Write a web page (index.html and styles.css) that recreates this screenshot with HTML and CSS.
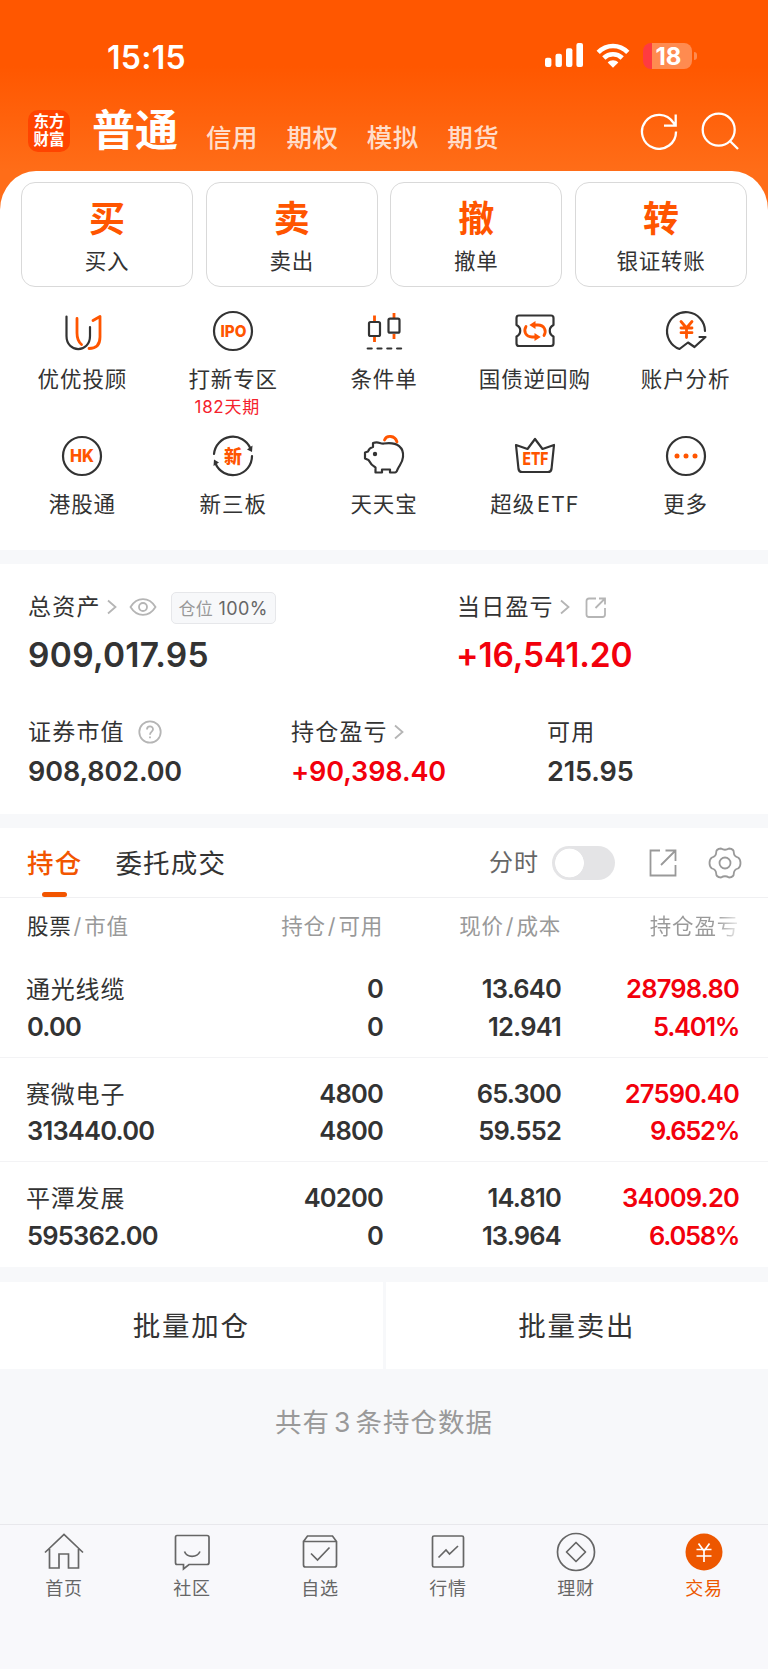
FILE: index.html
```html
<!DOCTYPE html>
<html lang="zh-CN">
<head>
<meta charset="utf-8">
<title>交易</title>
<link rel="stylesheet" href="styles.css">
</head>
<body>
<header class="top">
  <div class="status">
    <span class="clock">15:15</span>
    <div class="status-icons">
      <svg class="signal" width="38" height="24" viewBox="0 0 38 24" fill="#fff"><rect x="0" y="14.7" width="6.4" height="9.3" rx="2"/><rect x="10.5" y="10.7" width="6.4" height="13.3" rx="2"/><rect x="21" y="5.3" width="6.4" height="18.7" rx="2"/><rect x="31.4" y="0" width="6.6" height="24" rx="2"/></svg>
      <svg class="wifi" width="34" height="25" viewBox="0 0 34 25"><g fill="none" stroke="#fff" stroke-width="4.6"><path d="M2.2 9.3C10.5.8 23.5.8 31.800 9.300"/><path d="M7.800 15C13 9.900 21 9.900 26.200 15"/></g><path d="M17 24.800 11.700 19.400C14.500 16.500 19.500 16.500 22.300 19.400Z" fill="#fff"/></svg>
      <div class="battery"><span>18</span></div>
    </div>
  </div>
  <div class="title-bar">
    <div class="logo"><span>东方</span><span>财富</span></div>
    <h1>普通</h1>
    <nav class="accounts"><a>信用</a><a>期权</a><a>模拟</a><a>期货</a></nav>
    <svg class="refresh" width="38" height="38" viewBox="0 0 38 38" fill="none" stroke="#fff" stroke-width="2.300"><path d="M36 19.500A17 17 0 1 1 33.300 10.600L35.300 13M24 13.700H35.700V2.500"/></svg>
    <svg class="search" width="38" height="38" viewBox="0 0 38 38" fill="none" stroke="#fff" stroke-width="2.300"><circle cx="17.700" cy="17.700" r="16"/><path d="M28.700 28.700 37 37"/></svg>
  </div>
</header>
<main>
<section class="sheet">
  <div class="actions">
    <a class="action"><b>买</b><span>买入</span></a>
    <a class="action"><b>卖</b><span>卖出</span></a>
    <a class="action"><b>撤</b><span>撤单</span></a>
    <a class="action"><b>转</b><span>银证转账</span></a>
  </div>
  <div class="tools">
    <a class="tool"><svg class="ico" viewBox="0 0 44 44"><path d="M6.500 7.500V27C6.500 44.500 30 44.500 30 27V18"/><path class="o" d="M17 9.500V24C17 30 18.500 33 21.500 35.500M33 11.500 40 7.500V28C40 35.500 36 39.500 29 39.500"/></svg><span>优优投顾</span></a>
    <a class="tool"><svg class="ico" viewBox="0 0 44 44"><circle cx="22" cy="22" r="19"/><text x="22.500" y="28" font-size="16.500" textLength="26" lengthAdjust="spacingAndGlyphs">IPO</text></svg><span>打新专区</span><em>182天期</em></a>
    <a class="tool"><svg class="ico" viewBox="0 0 44 44"><path class="o" stroke-linecap="butt" d="M12.500 6.500V12M12.500 28V33M32 4V9M32 25V30"/><rect x="7" y="13" width="11" height="14" rx="1.500"/><rect x="26.500" y="9.700" width="11" height="14" rx="1.500"/><path stroke-dasharray="4 5.800" d="M5.700 39.500H39.500"/></svg><span>条件单</span></a>
    <a class="tool"><svg class="ico" viewBox="0 0 44 44"><path d="M6 6.500H38Q40.500 6.500 40.500 9V16C35.500 18.500 35.500 25 40.500 27.500V34.500Q40.500 37 38 37H6Q3.500 37 3.500 34.500V27.500C8.500 25 8.500 18.500 3.500 16V9Q3.500 6.500 6 6.500Z"/><path class="o" d="M21 16H25C31 16 34 21.500 31 26.500M23 28H19C13 28 10 22.500 13 17.500"/><path class="of" d="M16.300 16 22.500 12V20ZM27.700 28 21.500 24V32Z"/></svg><span>国债逆回购</span></a>
    <a class="tool"><svg class="ico" viewBox="0 0 44 44"><path d="M41 22A19 19 0 1 0 15.500 40L24 33.500 30.500 38 41.500 28H35.500"/><path class="o" stroke-width="3" d="M17 12.500 22.500 19 28 12.500M22.500 19V28.500M17 19H28M17 23.700H28"/></svg><span>账户分析</span></a>
    <a class="tool"><svg class="ico" viewBox="0 0 44 44"><circle cx="22" cy="22" r="19"/><text x="22" y="28" font-size="17" textLength="24" lengthAdjust="spacingAndGlyphs">HK</text></svg><span>港股通</span></a>
    <a class="tool"><svg class="ico" viewBox="0 0 44 44"><path d="M3 20A19 19 0 0 1 39.500 14.500M41 22A19 19 0 0 1 4.500 29.500"/><path class="df" d="M36 15.500 41.500 11.500 41 18ZM2.500 32 3 25.500 8 28.500Z"/><text class="cjk" x="22" y="28.500" font-size="18">新</text></svg><span>新三板</span></a>
    <a class="tool"><svg class="ico" viewBox="0 0 44 44"><path class="o" d="M22.500 6C24.500 1 33 1 35 8" stroke-width="3"/><path d="M11 9C17 7 17.500 10 22 9.500C36 7.500 42 14 41 23C40.500 29 37.500 31 35.500 35.500Q34.500 38.500 33 38.500H28V35.500H20V38.500H13.500V33.500C10 31.500 8.500 30 6.500 26L3 24.500V18.500L6 17.500C7 14.500 8.500 13.500 11 13Z"/><circle class="df" cx="13" cy="20" r="2.200"/></svg><span>天天宝</span></a>
    <a class="tool"><svg class="ico" viewBox="0 0 44 44"><path d="M3 11 14.500 15 22 5 29.500 15 41 11 38.500 35Q38 38 35 38H9Q6 38 5.500 35Z"/><text x="22.500" y="31" font-size="17" textLength="26" lengthAdjust="spacingAndGlyphs">ETF</text></svg><span>超级 ETF</span></a>
    <a class="tool"><svg class="ico" viewBox="0 0 44 44"><circle cx="22" cy="22" r="19"/><circle class="of" cx="13" cy="22" r="2.500"/><circle class="of" cx="22" cy="22" r="2.500"/><circle class="of" cx="31" cy="22" r="2.500"/></svg><span>更多</span></a>
  </div>
</section>

<section class="assets">
  <div class="asset-row major">
    <div>
      <div class="label">总资产<svg class="chev" viewBox="0 0 10 16"><path d="M1 1.500 8.500 8 1 14.500"/></svg><svg class="eye" viewBox="0 0 28 20"><path d="M1.500 10C8-.5 20-.5 26.500 10C20 20.500 8 20.500 1.500 10Z"/><circle cx="14" cy="10" r="4"/></svg><span class="badge">仓位 <i>100%</i></span></div>
      <div class="big">909,017.95</div>
    </div>
    <div>
      <div class="label">当日盈亏<svg class="chev" viewBox="0 0 10 16"><path d="M1 1.500 8.500 8 1 14.500"/></svg><svg class="share" viewBox="0 0 22 22"><path d="M11 1.500H4Q1.500 1.500 1.500 4V17.500Q1.500 20 4 20H17.500Q20 20 20 17.500V11M10.500 11 19.500 2M14 1.500H20V7.500"/></svg></div>
      <div class="big gain up">+16,541.20</div>
    </div>
  </div>
  <div class="asset-row minor">
    <div><div class="label">证券市值<svg class="help" viewBox="0 0 24 24"><circle cx="12" cy="12" r="10.700"/><path d="M9 9.500C9 5.500 15 5.500 15 9.300C15 11.700 12 11.500 12 14.700M12 16.500V18.300"/></svg></div><div class="num">908,802.00</div></div>
    <div><div class="label">持仓盈亏<svg class="chev" viewBox="0 0 10 16"><path d="M1 1.500 8.500 8 1 14.500"/></svg></div><div class="num up">+90,398.40</div></div>
    <div><div class="label">可用</div><div class="num">215.95</div></div>
  </div>
</section>

<section class="holdings">
  <div class="tabs">
    <a class="tab on">持仓</a><a class="tab">委托成交</a>
    <span class="mode">分时</span><span class="switch"></span>
    <svg class="export" viewBox="0 0 30 30"><path d="M12 2.500H2.500V27.500H27.500V17M13 17 27 3M17.500 2.500H27.500V13"/></svg>
    <svg class="gear" viewBox="0 0 34 34"><path d="M13 2.500Q17 5 21 2.500Q26 3 25.800 6.500Q26 10.500 30 11.500Q32.500 13 32.500 17Q32.500 21 30 22.500Q26 23.500 25.800 27.500Q26 31 21 31.500Q17 29 13 31.500Q8 31 8.200 27.500Q8 23.500 4 22.500Q1.500 21 1.500 17Q1.500 13 4 11.500Q8 10.500 8.200 6.500Q8 3 13 2.500Z" stroke-linejoin="round"/><circle cx="17" cy="17" r="5.500"/></svg>
  </div>
  <div class="row head"><span><b>股票</b><i>/</i>市值</span><span>持仓<i>/</i>可用</span><span>现价<i>/</i>成本</span><span class="fade">持仓盈亏</span></div>
  <div class="row"><div><p class="name">通光线缆</p><p>0.00</p></div><div><p>0</p><p>0</p></div><div><p>13.640</p><p>12.941</p></div><div class="up"><p>28798.80</p><p class="pct">5.401%</p></div></div>
  <div class="row"><div><p class="name">赛微电子</p><p>313440.00</p></div><div><p>4800</p><p>4800</p></div><div><p>65.300</p><p>59.552</p></div><div class="up"><p>27590.40</p><p class="pct">9.652%</p></div></div>
  <div class="row"><div><p class="name">平潭发展</p><p>595362.00</p></div><div><p>40200</p><p>0</p></div><div><p>14.810</p><p>13.964</p></div><div class="up"><p>34009.20</p><p class="pct">6.058%</p></div></div>
</section>

<div class="batch"><a>批量加仓</a><a>批量卖出</a></div>
<p class="total">共有<i>3</i>条持仓数据</p>
</main>
<footer class="dock">
  <a><svg viewBox="0 0 40 40"><path d="M1 20.500 20 2.500 39 20.500M5.500 17V36H15V22H24.500V36H34.500V17"/></svg>首页</a>
  <a><svg viewBox="0 0 40 40"><path d="M5 3.500H35Q37 3.500 37 5.500V30.500Q37 32.500 35 32.500H17L11.500 37V32.500H5Q3.500 32.500 3.500 30.500V5.500Q3.500 3.500 5 3.500ZM12.500 19.500C15 26 25 26 28 19.500"/></svg>社区</a>
  <a><svg viewBox="0 0 40 40"><path d="M3.500 9.500 7.500 4H32.500L36.500 9.500V33Q36.500 35 34.500 35H5.500Q3.500 35 3.500 33V9.500H36.500M11 21.500 17.500 28 29.500 15.500"/></svg>自选</a>
  <a><svg viewBox="0 0 40 40"><rect x="4.500" y="4" width="31" height="31" rx="1.500"/><path d="M10.500 25.500 18 18 21.500 22 30 14"/></svg>行情</a>
  <a><svg viewBox="0 0 40 40"><circle cx="20" cy="20" r="18.500"/><path d="M20 10.500 29.500 20 20 29.500 10.500 20Z" stroke-linejoin="round"/></svg>理财</a>
  <a class="current"><svg viewBox="0 0 40 40"><circle class="disc" cx="20" cy="20" r="18.500"/><path d="M14.500 11.500 20 19 25.500 11.500M20 19V30M12.500 17.500H27.500M12.500 24H27.500"/></svg>交易</a>
</footer>
</body>
</html>
```
FILE: styles.css
```css
* { box-sizing: border-box; }
body { margin: 0; width: 768px; height: 1669px; display: flex; flex-direction: column; background: #f7f8fa; color: #333; font-family: Inter, "Noto Sans CJK SC", sans-serif; font-size: 22px; line-height: 1.2; }
svg { display: block; flex: none; }
h1, p { margin: 0; }
i, em { font-style: normal; }
main { flex: 1; }

.top { height: 210px; background: linear-gradient(#ff5700 0, #ff5700 66px, #ff6d18 171px, #ff6d18 100%); color: #fff; }
.status { height: 100px; display: flex; justify-content: space-between; padding: 43px 76px 0 107px; }
.clock { font-size: 32px; line-height: 29px; font-weight: 600; letter-spacing: .3px; }
.status-icons { display: flex; height: 27px; }
.wifi { margin: 0 13px; }
.battery { position: relative; width: 49px; height: 26px; border-radius: 8px; background: linear-gradient(90deg, #ff3b40 9px, #ff8b50 9px); font-size: 24px; font-weight: 700; line-height: 27px; text-align: center; padding-left: 2px; }
.battery::after { content: ""; position: absolute; left: 51px; top: 9px; width: 3px; height: 8px; border-radius: 0 3px 3px 0; background: #ff8b50; }
.title-bar { display: flex; height: 60px; padding: 0 29px 0 28px; }
.logo { width: 42px; height: 42px; margin-top: 10px; padding-top: 3px; border-radius: 10px; background: #ff4400; display: flex; flex-direction: column; align-items: center; font-size: 15.500px; font-weight: 700; line-height: 18px; }
h1 { margin: 3px 0 0 22px; width: 93px; font-size: 43px; line-height: 55px; font-weight: 700; white-space: nowrap; }
.accounts { display: flex; gap: 28.400px; margin: 22px auto 0 21px; font-size: 25.500px; letter-spacing: .5px; font-weight: 500; line-height: 32px; color: rgba(255,255,255,.8); }
.refresh { margin: 12px 23px 0 0; }
.search { margin-top: 12px; }

.sheet { height: 379px; margin-top: -39px; padding-top: 11px; background: #fff; border-radius: 36px 36px 0 0 / 39px 39px 0 0; position: relative; }
.actions { display: grid; grid-template-columns: repeat(4, 1fr); gap: 12.500px; padding: 0 21px; }
.action { height: 105px; border: 1px solid #d9d9d9; border-radius: 14px; display: flex; flex-direction: column; align-items: center; }
.action b { color: #ff5500; font-size: 36px; font-weight: 700; line-height: 44px; margin-top: 14px; }
.action span { font-size: 21.500px; letter-spacing: .7px; line-height: 30px; margin-top: 5px; }
.tools { display: grid; grid-template-columns: repeat(5, 1fr); grid-auto-rows: 125.500px; padding: 21.500px 7px 0; }
.tool { display: flex; flex-direction: column; align-items: center; }
.tool span { font-size: 21.500px; letter-spacing: .9px; line-height: 30px; margin-top: 11px; white-space: nowrap; word-spacing: -5px; }
.tool em { font-size: 17px; letter-spacing: .7px; line-height: 20px; color: #f5222d; margin: 3px 12px 0 0; }
.ico { width: 44px; height: 44px; fill: none; stroke: #333; stroke-width: 2.200; stroke-linecap: round; stroke-linejoin: round; }
.ico .o { stroke: #ff5500; stroke-width: 2.800; }
.ico .of { fill: #ff5500; stroke: none; }
.ico .df { fill: #333; stroke: none; }
.ico text { fill: #ff5500; stroke: none; font-weight: 800; text-anchor: middle; }
.ico .cjk { font-family: "Noto Sans CJK SC", sans-serif; }

.assets { margin-top: 14px; height: 250px; padding: 0 28px; background: #fff; }
.asset-row { display: grid; }
.major { grid-template-columns: 429px 1fr; padding-top: 25px; height: 150px; }
.minor { grid-template-columns: 263px 256px 1fr; }
.label { display: flex; align-items: center; height: 34px; padding-top: 4px; font-size: 23px; letter-spacing: 1.200px; white-space: nowrap; }
.label svg { fill: none; stroke: #b5b5b5; stroke-width: 1.800; margin-top: -2px; }
.label .chev { width: 10px; height: 16px; margin-left: 6px; }
.label .eye { width: 28px; height: 20px; margin-left: 12px; }
.label .share { width: 22px; height: 22px; margin: 0 0 0 15px; }
.label .help { width: 24px; height: 24px; margin-left: 13px; }
.badge { flex: none; height: 32px; margin: -1px 0 0 14px; width: 105px; border: 1px solid #e6e7ea; border-radius: 5px; background: #f7f8fa; text-align: center; line-height: 31px; color: #999; font-size: 17px; letter-spacing: .4px; }
.badge i { color: #666; font-size: 18px; }
.big { margin-top: 12px; font-size: 33.500px; line-height: 40px; font-weight: 600; letter-spacing: .3px; }
.gain { letter-spacing: -.1px; margin-left: -1px; }
.num { margin-top: 8px; font-size: 27px; line-height: 32px; font-weight: 600; letter-spacing: -.1px; }
.up { color: #f2000c; }

.holdings { margin-top: 14px; height: 439px; background: #fff; }
.tabs { height: 70px; border-bottom: 1px solid #f0f0f2; display: flex; align-items: center; padding: 0 26px 0 27px; }
.tab { height: 70px; line-height: 71px; font-size: 26.500px; letter-spacing: 1.200px; margin-right: 33px; position: relative; }
.on { color: #f25500; font-weight: 500; }
.on::after { content: ""; position: absolute; left: 15px; bottom: 1px; width: 25px; height: 5px; border-radius: 2.500px; background: #f25500; }
.mode { margin-left: auto; padding-top: 2px; font-size: 24px; letter-spacing: 1px; color: #666; }
.switch { width: 63px; height: 34px; border-radius: 17px; margin: 0 33px 0 13px; background: radial-gradient(circle at 17.500px 17px, #fff 14px, #e4e4e6 14.700px); }
.export { width: 30px; height: 30px; margin-right: 30px; fill: none; stroke: #999; stroke-width: 1.800; }
.gear { width: 34px; height: 34px; fill: none; stroke: #999; stroke-width: 1.800; }
.row { display: grid; grid-template-columns: repeat(4, 178px); height: 104.500px; padding: 17px 28px 0 27px; text-align: right; border-bottom: 1px solid #f3f3f5; font-size: 25.500px; line-height: 37.500px; font-weight: 600; letter-spacing: -.8px; }
.row > :first-child { text-align: left; }
.row .name { font-size: 24px; font-weight: 400; letter-spacing: .8px; position: relative; left: -1px; top: 1px; }
.row .pct { letter-spacing: -1.300px; }
.row:last-child { border: 0; }
.row.head { height: 55px; padding-top: 10px; border: 0; color: #999; font-size: 21.500px; font-weight: 400; letter-spacing: .8px; }
.head b { font-weight: 400; color: #333; }
.head i { margin: 0 2px; }
.fade { background: linear-gradient(90deg, #999 155px, #eee 178px); background-clip: text; color: transparent; }

.batch { margin-top: 15px; height: 87px; display: grid; grid-template: 87px / 1fr 1fr; gap: 3px; }
.batch a { background: #fff; text-align: center; line-height: 87px; padding-top: 1px; font-size: 27.500px; letter-spacing: 1.700px; }
.total { margin-top: 33px; text-align: center; font-size: 26.500px; line-height: 40px; letter-spacing: 1px; color: #999; }
.total i { margin: 0 4px; }

.dock { height: 145px; padding-top: 7px; border-top: 1px solid #e8e8ec; background: #f8f8fb; display: grid; grid-template-columns: repeat(6, 1fr); }
.dock a { display: flex; flex-direction: column; align-items: center; font-size: 18px; letter-spacing: .8px; line-height: 34px; color: #666; }
.dock svg { width: 40px; height: 40px; fill: none; stroke: #666; stroke-width: 1.700; }
.dock .current { color: #ed5700; }
.dock .current svg { stroke: #fff; }
.dock .disc { fill: #ed5700; stroke: none; }
```
